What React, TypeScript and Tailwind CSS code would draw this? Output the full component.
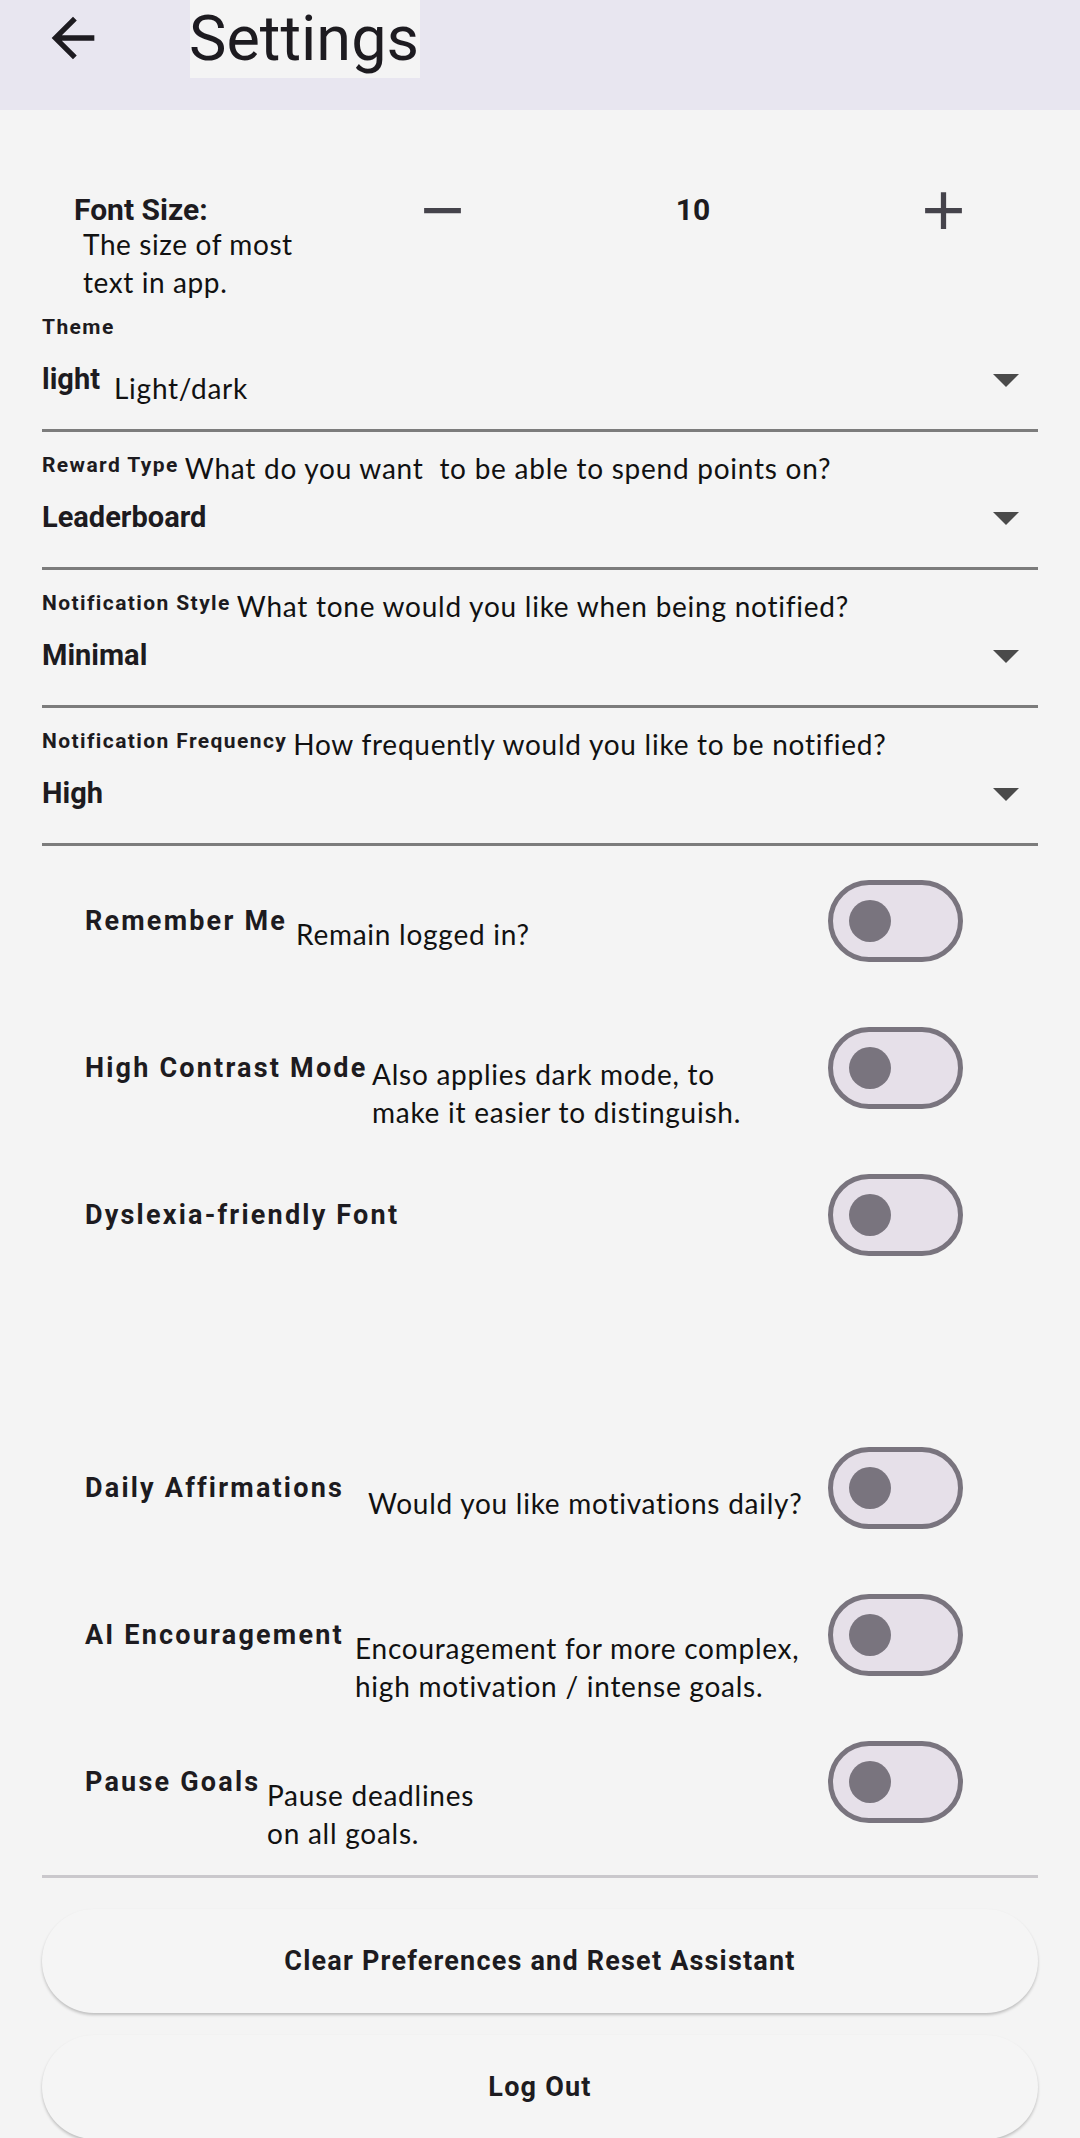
import React from "react";

const dropdowns = [
  { label: "Theme", value: "light", hint: "Light/dark", hintInline: false },
  { label: "Reward Type", value: "Leaderboard", hint: "What do you want  to be able to spend points on?", hintInline: true },
  { label: "Notification Style", value: "Minimal", hint: "What tone would you like when being notified?", hintInline: true },
  { label: "Notification Frequency", value: "High", hint: "How frequently would you like to be notified?", hintInline: true },
];

const toggles = [
  { label: "Remember Me", labelW: "w-[211px]", lines: ["Remain logged in?"], descMt: "mt-[35px]", rowMt: "mt-[34px]" },
  { label: "High Contrast Mode", labelW: "w-[287px]", lines: ["Also applies dark mode, to", "make it easier to distinguish."], descMt: "mt-[28px]", rowMt: "mt-[65px]" },
  { label: "Dyslexia-friendly Font", labelW: "w-[330px]", lines: [], descMt: "mt-[36px]", rowMt: "mt-[65px]" },
  { label: "Daily Affirmations", labelW: "w-[283px]", lines: ["Would you like motivations daily?"], descMt: "mt-[37px]", rowMt: "mt-[191px]" },
  { label: "AI Encouragement", labelW: "w-[270px]", lines: ["Encouragement for more complex,", "high motivation / intense goals."], descMt: "mt-[35px]", rowMt: "mt-[65px]" },
  { label: "Pause Goals", labelW: "w-[182px]", lines: ["Pause deadlines", "on all goals."], descMt: "mt-[35px]", rowMt: "mt-[65px]" },
];

const DropArrow = () => (
  <svg width="26" height="13" viewBox="7 10 10 5" className="mt-[13px] mr-[19px] shrink-0">
    <path d="M7 10l5 5 5-5z" fill="#4a4a4a" />
  </svg>
);

const Switch = () => (
  <div className="ml-auto w-[135px] h-[82px] shrink-0 rounded-full border-[5px] border-[#79747e] bg-[#e6e0e9] flex items-center pl-[16px]">
    <div className="w-[42px] h-[42px] rounded-full bg-[#79747e]" />
  </div>
);

export default function App() {
  return (
    <div className="min-h-screen w-[1080px] bg-[#f4f4f4] font-[Roboto,sans-serif] text-[#1d1b20] overflow-hidden">
      {/* app bar */}
      <header className="h-[110px] bg-[#e8e6f0] flex items-start">
        <svg width="64" height="64" viewBox="0 0 24 24" className="ml-[41px] mt-[6px] shrink-0">
          <path d="M20 11H7.83l5.59-5.59L12 4l-8 8 8 8 1.41-1.41L7.83 13H20v-2z" fill="#1d1b20" />
        </svg>
        <div className="ml-[85px] h-[78px] w-[230px] bg-[#f4f4f4] flex items-center">
          <h1 className="text-[63px] leading-[78px] font-normal whitespace-nowrap -ml-[1px]">Settings</h1>
        </div>
      </header>

      {/* font size */}
      <section className="h-[184px] pt-[82px]">
        <div className="ml-[74px] flex items-start">
          <div className="w-[337px] shrink-0">
            <div className="text-[30px] leading-[36px] font-bold">Font Size:</div>
            <div className="ml-[9px] -mt-[3px] font-[Lato,sans-serif] text-[28px] leading-[38px] tracking-[0.6px] text-[#111]">
              The size of most
              <br />
              text in app.
            </div>
          </div>
          <div className="w-[63px] h-[36px] flex items-center justify-center shrink-0">
            <svg width="63" height="63" viewBox="0 0 24 24">
              <path d="M19 13H5v-2h14v2z" fill="#45434b" />
            </svg>
          </div>
          <div className="w-[438px] text-center text-[30px] leading-[36px] font-bold">10</div>
          <div className="w-[63px] h-[36px] flex items-center justify-center shrink-0">
            <svg width="63" height="63" viewBox="0 0 24 24">
              <path d="M19 13h-6v6h-2v-6H5v-2h6V5h2v6h6v2z" fill="#45434b" />
            </svg>
          </div>
        </div>
      </section>

      <main className="px-[42px]">
        {/* dropdowns */}
        {dropdowns.map((d) => (
          <div key={d.label} className="h-[138px] border-b-[3px] border-[#7c7c7c] pt-[19px]">
            <div className="h-[34px] flex items-start gap-[6px]">
              <span className="text-[21px] leading-[28px] font-bold tracking-[1.4px] text-[#1d1b20] whitespace-nowrap">
                {d.label}
              </span>
              {d.hintInline && (
                <span className="font-[Lato,sans-serif] text-[28px] leading-[34px] tracking-[0.75px] text-[#111] whitespace-pre">
                  {d.hint}
                </span>
              )}
            </div>
            <div className="mt-[14px] h-[36px] flex items-start">
              <span className="text-[29px] leading-[36px] font-bold">{d.value}</span>
              {!d.hintInline && (
                <span className="ml-[14px] mt-[10px] font-[Lato,sans-serif] text-[28px] leading-[34px] tracking-[0.75px] text-[#111]">
                  {d.hint}
                </span>
              )}
              <span className="flex-1" />
              <DropArrow />
            </div>
          </div>
        ))}

        {/* toggles */}
        {toggles.map((t) => (
          <div key={t.label} className={`${t.rowMt} h-[82px] flex items-start pl-[43px] pr-[75px]`}>
            <span
              className={`${t.labelW} shrink-0 self-center text-[27px] leading-[34px] font-bold tracking-[2.2px] whitespace-nowrap`}
            >
              {t.label}
            </span>
            {t.lines.length > 0 && (
              <div className={`${t.descMt} font-[Lato,sans-serif] text-[28px] leading-[38px] tracking-[0.75px] text-[#111] whitespace-nowrap`}>
                {t.lines.map((l) => (
                  <div key={l}>{l}</div>
                ))}
              </div>
            )}
            <Switch />
          </div>
        ))}

        <div className="mt-[52px] h-[3px] bg-[#cac8cc]" />

        <button className="mt-[31px] w-full h-[104px] rounded-full bg-[#f5f5f5] shadow-[0_2px_3px_rgba(0,0,0,0.22)] text-[27px] font-bold tracking-[1.2px] text-[#1d1b20]">
          Clear Preferences and Reset Assistant
        </button>
        <button className="mt-[22px] w-full h-[104px] rounded-full bg-[#f5f5f5] shadow-[0_2px_3px_rgba(0,0,0,0.22)] text-[27px] font-bold tracking-[1.2px] text-[#1d1b20]">
          Log Out
        </button>
      </main>
    </div>
  );
}
